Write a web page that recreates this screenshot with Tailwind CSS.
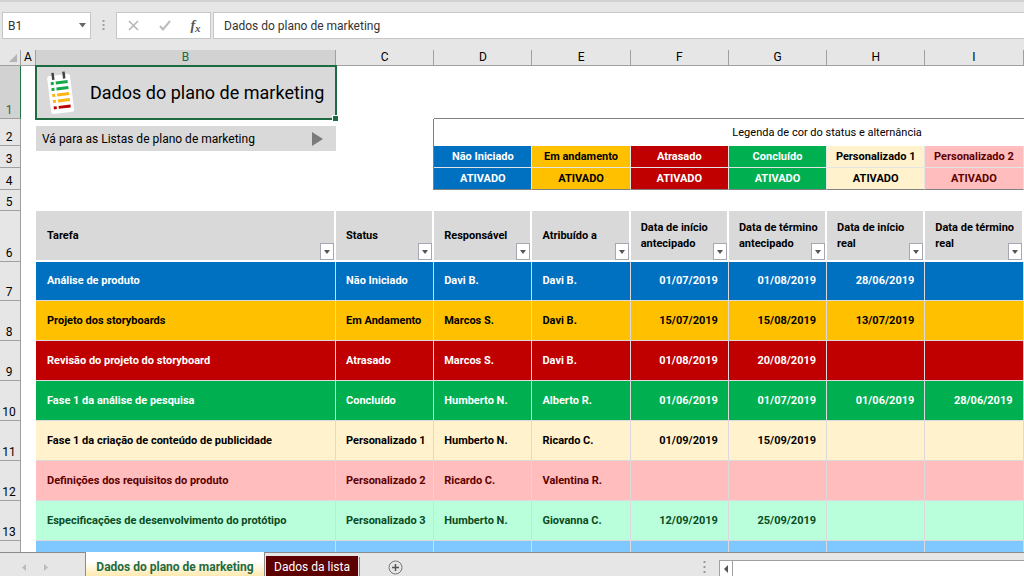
<!DOCTYPE html>
<html lang="pt-BR">
<head>
<meta charset="utf-8">
<title>Dados do plano de marketing</title>
<script src="https://cdn.jsdelivr.net/npm/@tailwindcss/browser@4"></script>
</head>
<body class="flex h-screen flex-col overflow-hidden bg-[#e6e6e6] font-['Roboto',sans-serif] text-xs text-black">

<!-- Formula bar -->
<header class="flex h-[50px] shrink-0 items-start border-t-2 border-[#d2d2d2] pt-[10px] text-[#333]">
  <div class="ml-[2px] flex h-[27px] w-[89px] border border-[#c6c6c6] bg-white">
    <input aria-label="Caixa de nome" value="B1" class="w-full min-w-0 flex-1 pl-[5px] outline-none">
    <button aria-label="Abrir lista de nomes" class="flex w-4 items-center justify-center"><svg class="h-[5px] w-[7px]" viewBox="0 0 7 5"><path d="M0 0h7L3.500 4.500z" fill="#666"/></svg></button>
  </div>
  <svg class="mx-[11px] h-[27px] w-[3px]" viewBox="0 0 3 27" fill="#a0a0a0"><path d="M.500 8h2v2h-2zM.500 12h2v2h-2zM.500 16h2v2h-2z"/></svg>
  <div class="flex h-[27px] w-[95px] items-center border border-[#c6c6c6] bg-white">
    <button aria-label="Cancelar" class="flex w-8 justify-center"><svg class="h-[11px] w-[11px]" viewBox="0 0 11 11" fill="none" stroke="#b5b5b5" stroke-width="1.500"><path d="M1 1l9 9M10 1l-9 9"/></svg></button>
    <button aria-label="Inserir" class="flex w-8 justify-center"><svg class="h-[11px] w-3" viewBox="0 0 12 11" fill="none" stroke="#bcbcbc" stroke-width="2"><path d="M1 6l3 3.500L11 1"/></svg></button>
    <button aria-label="Inserir função" class="flex flex-1 justify-center font-['Liberation_Serif',serif] text-sm leading-4 font-bold text-[#555] italic">f<span class="self-end text-[11px] leading-3">x</span></button>
  </div>
  <input aria-label="Barra de fórmulas" value="Dados do plano de marketing" class="ml-[2px] h-[27px] min-w-0 flex-1 border border-r-0 border-[#c6c6c6] bg-white pl-[10px] outline-none">
</header>

<!-- Worksheet -->
<main class="min-h-0 flex-1 overflow-hidden bg-white">
<table class="w-[calc(100%+196px)] table-fixed border-separate border-spacing-0 text-left text-[11px] leading-4">
  <colgroup><col class="w-[21px]"><col class="w-[15px]"><col class="w-[300px]"><col><col><col><col><col><col><col><col><col></colgroup>
  <thead>
    <tr class="h-4 bg-[#e6e6e6] [&>th]:border-r [&>th]:border-b [&>th]:border-[#a0a0a0] [&>th]:p-0 [&>th]:text-center [&>th]:text-xs [&>th]:leading-[15px] [&>th]:font-normal">
      <th><svg class="ml-2 h-[10px] w-[10px]" viewBox="0 0 10 10"><path d="M9 1v8H1z" fill="#b4b4b4"/></svg></th>
      <th>A</th><th class="bg-[#d2d2d2] text-[#1e6b41]">B</th><th>C</th><th>D</th><th>E</th><th>F</th><th>G</th><th>H</th><th>I</th><th></th><th></th>
    </tr>
  </thead>
  <tbody class="[&_th:first-child]:border-r [&_th:first-child]:border-b [&_th:first-child]:border-[#a0a0a0] [&_th:first-child]:bg-[#e6e6e6] [&_th:first-child]:p-0 [&_th:first-child]:pr-[2px] [&_th:first-child]:text-center [&_th:first-child]:align-bottom [&_th:first-child]:text-xs [&_th:first-child]:font-normal [&_th:first-child]:text-black">
    <tr class="h-[53px]">
      <th class="text-[#1e6b41]! bg-[#d2d2d2]! border-r-[#217346]!">1</th><td></td>
      <td class="relative bg-[#d9d9d9] p-0">
        <div class="flex items-center pl-[9px]">
          <svg class="h-11 w-8 shrink-0" viewBox="0 0 32 44"><g transform="rotate(-7 16 22)"><rect x="4" y="4" width="23" height="38" rx="2" fill="#fff"/><g stroke-width="3"><path d="M12 11.500h12M12 17.500h12M7 11.500h3M7 17.500h3" stroke="#17a84b"/><path d="M12 23.500h12M12 29.500h12M7 23.500h3M7 29.500h3" stroke="#fdb515"/><path d="M12 36h12M7 36h3" stroke="#c00000"/></g><path d="M10 1v7M21 1v7" stroke="#444" stroke-width="2.500"/></g></svg>
          <h1 class="ml-[13px] text-lg whitespace-nowrap">Dados do plano de marketing</h1>
        </div>
        <div class="pointer-events-none absolute -inset-px border-2 border-[#1e6b41]"><span class="absolute -right-[3px] -bottom-[3px] h-[5px] w-[5px] bg-[#1e6b41] outline outline-white"></span></div>
      </td>
      <td></td><td colspan="8" class="border-b border-[#808080]"></td>
    </tr>
    <tr class="h-[27px]">
      <th>2</th><td></td>
      <td class="relative p-0"><a href="#lista" class="absolute inset-x-0 top-[7px] flex h-[25px] items-center justify-between bg-[#d9d9d9] pr-[13px] pl-[6px] text-xs whitespace-nowrap">Vá para as Listas de plano de marketing<svg class="h-[14px] w-[11px]" viewBox="0 0 11 14"><path d="M0 0l11 7L0 14z" fill="#7b7b7b"/></svg></a></td>
      <td class="border-r border-[#808080]"></td>
      <td colspan="8" class="p-0 text-center">Legenda de cor do status e alternância</td>
    </tr>
    <tr class="h-[22px] [&>td]:border-r [&>td]:border-b [&>td]:border-[#e4e4e4] [&>td]:p-0 [&>td]:text-center [&>td]:font-bold">
      <th>3</th><td class="border-0!"></td><td class="border-0!"></td><td class="border-b-0! border-r-[#808080]!"></td>
      <td class="bg-[#0070c0] text-white">Não Iniciado</td><td class="bg-[#ffc000]">Em andamento</td><td class="bg-[#c00000] text-white">Atrasado</td><td class="bg-[#00b050] text-white">Concluído</td><td class="bg-[#fff2cc]">Personalizado 1</td><td class="bg-[#ffbdbd] text-[#5c0000]">Personalizado 2</td><td class="bg-[#b9ffdc]"></td><td class="bg-[#7fc7ff]"></td>
    </tr>
    <tr class="h-[22px] [&>td]:border-r [&>td]:border-b [&>td]:border-r-[#e4e4e4] [&>td]:border-b-[#808080] [&>td]:p-0 [&>td]:text-center [&>td]:font-bold">
      <th>4</th><td class="border-0!"></td><td class="border-0!"></td><td class="border-b-0! border-r-[#808080]!"></td>
      <td class="bg-[#0070c0] text-white">ATIVADO</td><td class="bg-[#ffc000]">ATIVADO</td><td class="bg-[#c00000] text-white">ATIVADO</td><td class="bg-[#00b050] text-white">ATIVADO</td><td class="bg-[#fff2cc]">ATIVADO</td><td class="bg-[#ffbdbd] text-[#5c0000]">ATIVADO</td><td class="bg-[#b9ffdc]"></td><td class="bg-[#7fc7ff]"></td>
    </tr>
    <tr class="h-[21px]"><th>5</th><td colspan="11"></td></tr>
    <tr class="h-[51px] [&>th+td~th]:relative [&>th+td~th]:border-r-2 [&>th+td~th]:border-b-2 [&>th+td~th]:border-white [&>th+td~th]:bg-[#d9d9d9] [&>th+td~th]:pr-0 [&>th+td~th]:pl-[10px] [&>th+td~th]:py-0 [&>th+td~th]:font-bold [&_button]:absolute [&_button]:right-0 [&_button]:bottom-0 [&_button]:flex [&_button]:h-[17px] [&_button]:w-[14px] [&_button]:items-center [&_button]:justify-center [&_button]:border [&_button]:border-[#a5a8b0] [&_button]:bg-white">
      <th>6</th><td></td>
      <th class="pl-[11px]!">Tarefa<button aria-label="Filtrar Tarefa"><svg class="h-1 w-[6px]" viewBox="0 0 6 4"><path d="M0 0h6L3 4z" fill="#555"/></svg></button></th>
      <th>Status<button aria-label="Filtrar Status"><svg class="h-1 w-[6px]" viewBox="0 0 6 4"><path d="M0 0h6L3 4z" fill="#555"/></svg></button></th>
      <th>Responsável<button aria-label="Filtrar Responsável"><svg class="h-1 w-[6px]" viewBox="0 0 6 4"><path d="M0 0h6L3 4z" fill="#555"/></svg></button></th>
      <th>Atribuído a<button aria-label="Filtrar Atribuído a"><svg class="h-1 w-[6px]" viewBox="0 0 6 4"><path d="M0 0h6L3 4z" fill="#555"/></svg></button></th>
      <th>Data de início<br>antecipado<button aria-label="Filtrar Data de início antecipado"><svg class="h-1 w-[6px]" viewBox="0 0 6 4"><path d="M0 0h6L3 4z" fill="#555"/></svg></button></th>
      <th>Data de término<br>antecipado<button aria-label="Filtrar Data de término antecipado"><svg class="h-1 w-[6px]" viewBox="0 0 6 4"><path d="M0 0h6L3 4z" fill="#555"/></svg></button></th>
      <th>Data de início<br>real<button aria-label="Filtrar Data de início real"><svg class="h-1 w-[6px]" viewBox="0 0 6 4"><path d="M0 0h6L3 4z" fill="#555"/></svg></button></th>
      <th>Data de término<br>real<button aria-label="Filtrar Data de término real"><svg class="h-1 w-[6px]" viewBox="0 0 6 4"><path d="M0 0h6L3 4z" fill="#555"/></svg></button></th>
      <th></th><th></th>
    </tr>
  </tbody>
  <tbody class="[&_th]:border-r [&_th]:border-b [&_th]:border-[#a0a0a0] [&_th]:bg-[#e6e6e6] [&_th]:p-0 [&_th]:pr-[2px] [&_th]:text-center [&_th]:align-bottom [&_th]:text-xs [&_th]:font-normal [&_th]:text-black [&_td]:px-[10px] [&_td]:py-0 [&_td]:font-bold [&_td]:whitespace-nowrap [&_td:nth-child(n+3)]:border-r [&_td:nth-child(n+3)]:border-b [&_td:nth-child(n+3)]:border-[#dcd8dc] [&_td:nth-child(3)]:pl-[11px] [&_td:nth-child(n+7)]:text-right [&_td:nth-child(2)]:bg-white [&_td:nth-child(2)]:p-0">
    <tr class="h-[39px] bg-[#0070c0] text-white"><th>7</th><td></td><td>Análise de produto</td><td>Não Iniciado</td><td>Davi B.</td><td>Davi B.</td><td>01/07/2019</td><td>01/08/2019</td><td>28/06/2019</td><td></td><td></td><td></td></tr>
    <tr class="h-10 bg-[#ffc000]"><th>8</th><td></td><td>Projeto dos storyboards</td><td>Em Andamento</td><td>Marcos S.</td><td>Davi B.</td><td>15/07/2019</td><td>15/08/2019</td><td>13/07/2019</td><td></td><td></td><td></td></tr>
    <tr class="h-10 bg-[#c00000] text-white"><th>9</th><td></td><td>Revisão do projeto do storyboard</td><td>Atrasado</td><td>Marcos S.</td><td>Davi B.</td><td>01/08/2019</td><td>20/08/2019</td><td></td><td></td><td></td><td></td></tr>
    <tr class="h-10 bg-[#00b050] text-white"><th>10</th><td></td><td>Fase 1 da análise de pesquisa</td><td>Concluído</td><td>Humberto N.</td><td>Alberto R.</td><td>01/06/2019</td><td>01/07/2019</td><td>01/06/2019</td><td>28/06/2019</td><td></td><td></td></tr>
    <tr class="h-10 bg-[#fff2cc]"><th>11</th><td></td><td>Fase 1 da criação de conteúdo de publicidade</td><td>Personalizado 1</td><td>Humberto N.</td><td>Ricardo C.</td><td>01/09/2019</td><td>15/09/2019</td><td></td><td></td><td></td><td></td></tr>
    <tr class="h-10 bg-[#ffbdbd] text-[#5c0000]"><th>12</th><td></td><td>Definições dos requisitos do produto</td><td>Personalizado 2</td><td>Ricardo C.</td><td>Valentina R.</td><td></td><td></td><td></td><td></td><td></td><td></td></tr>
    <tr class="h-10 bg-[#b9ffdc] text-[#0b4a22]"><th>13</th><td></td><td>Especificações de desenvolvimento do protótipo</td><td>Personalizado 3</td><td>Humberto N.</td><td>Giovanna C.</td><td>12/09/2019</td><td>25/09/2019</td><td></td><td></td><td></td><td></td></tr>
    <tr class="h-10 bg-[#7fc7ff]"><th></th><td></td><td></td><td></td><td></td><td></td><td></td><td></td><td></td><td></td><td></td><td></td></tr>
  </tbody>
</table>
</main>

<!-- Sheet tabs and horizontal scroll -->
<footer class="flex h-6 shrink-0 items-stretch border-t border-[#8c8c8c]">
  <div class="flex w-[85px] items-center gap-[18px] pt-[5px] pl-[21px]">
    <button aria-label="Planilha anterior"><svg class="h-[7px] w-[5px]" viewBox="0 0 5 7"><path d="M5 0v7L1 3.500z" fill="#bbb"/></svg></button>
    <button aria-label="Próxima planilha"><svg class="h-[7px] w-[5px]" viewBox="0 0 5 7"><path d="M0 0v7l4-3.500z" fill="#bbb"/></svg></button>
  </div>
  <button class="-mt-px w-[180px] border-x border-[#8c8c8c] bg-linear-to-b from-white from-40% to-[#ffe9ae] pt-[5px] font-bold whitespace-nowrap text-[#1e6b41]">Dados do plano de marketing</button>
  <button class="mt-[3px] ml-px w-[92px] bg-[#5c0000] pt-[2px] whitespace-nowrap text-white">Dados da lista</button>
  <span class="mt-1 ml-px w-px bg-[#8c8c8c]"></span>
  <button aria-label="Nova planilha" class="ml-7 pt-[5px]"><svg class="h-[15px] w-[15px]" viewBox="0 0 15 15" fill="none" stroke="#777"><circle cx="7.500" cy="7.500" r="6.500"/><path d="M7.500 4v7M4 7.500h7" stroke="#555" stroke-width="1.500"/></svg></button>
  <div class="ml-auto flex w-[321px] items-stretch pt-[7px]">
    <svg class="mr-[13px] h-[14px] w-[3px]" viewBox="0 0 3 14" fill="#999"><path d="M.500 1h2v2h-2zM.500 6h2v2h-2zM.500 11h2v2h-2z"/></svg>
    <button aria-label="Rolar para a esquerda" class="flex w-[14px] items-center justify-center border border-b-0 border-[#a0a0a0] bg-white"><svg class="h-2 w-1" viewBox="0 0 4 8"><path d="M4 0v8L0 4z" fill="#555"/></svg></button>
    <span class="flex-1 border-t border-[#a0a0a0] bg-white"></span>
  </div>
</footer>
</body>
</html>
